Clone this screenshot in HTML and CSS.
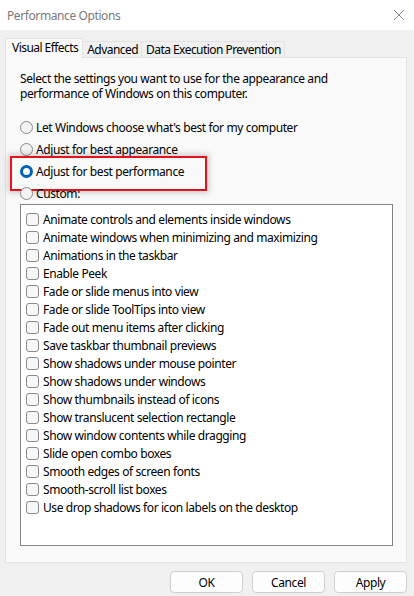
FILE: index.html
```html
<!DOCTYPE html>
<html>
<head>
<meta charset="utf-8">
<link rel="stylesheet" href="styles.css">
</head>
<body>
<div class="window">
  <div class="titlebar">
    <span class="title">Performance Options</span>
    <svg class="close" width="12" height="12" viewBox="0 0 12 12"><path d="M1 1 L11 11 M11 1 L1 11" stroke="#8a8a8a" stroke-width="1" fill="none"/></svg>
  </div>
  <div class="client">
    <div class="tabs">
      <div class="tab selected">Visual Effects</div>
      <div class="tab">Advanced</div>
      <div class="tab">Data Execution Prevention</div>
    </div>
    <div class="panel">
      <p class="intro">Select the settings you want to use for the appearance and performance of Windows on this computer.</p>
      <div class="radios">
        <div class="radio-row"><span class="radio"></span><span>Let Windows choose what's best for my computer</span></div>
        <div class="radio-row"><span class="radio"></span><span>Adjust for best appearance</span></div>
        <div class="radio-row highlight"><span class="radio checked"></span><span>Adjust for best performance</span><span class="redbox"></span></div>
        <div class="radio-row"><span class="radio"></span><span>Custom:</span></div>
      </div>
      <div class="listbox">
        <div class="item"><span class="check"></span><span>Animate controls and elements inside windows</span></div>
        <div class="item"><span class="check"></span><span>Animate windows when minimizing and maximizing</span></div>
        <div class="item"><span class="check"></span><span>Animations in the taskbar</span></div>
        <div class="item"><span class="check"></span><span>Enable Peek</span></div>
        <div class="item"><span class="check"></span><span>Fade or slide menus into view</span></div>
        <div class="item"><span class="check"></span><span>Fade or slide ToolTips into view</span></div>
        <div class="item"><span class="check"></span><span>Fade out menu items after clicking</span></div>
        <div class="item"><span class="check"></span><span>Save taskbar thumbnail previews</span></div>
        <div class="item"><span class="check"></span><span>Show shadows under mouse pointer</span></div>
        <div class="item"><span class="check"></span><span>Show shadows under windows</span></div>
        <div class="item"><span class="check"></span><span>Show thumbnails instead of icons</span></div>
        <div class="item"><span class="check"></span><span>Show translucent selection rectangle</span></div>
        <div class="item"><span class="check"></span><span>Show window contents while dragging</span></div>
        <div class="item"><span class="check"></span><span>Slide open combo boxes</span></div>
        <div class="item"><span class="check"></span><span>Smooth edges of screen fonts</span></div>
        <div class="item"><span class="check"></span><span>Smooth-scroll list boxes</span></div>
        <div class="item"><span class="check"></span><span>Use drop shadows for icon labels on the desktop</span></div>
      </div>
    </div>
    <div class="buttons">
      <button class="btn">OK</button>
      <button class="btn">Cancel</button>
      <button class="btn">Apply</button>
    </div>
  </div>
</div>
</body>
</html>
```
FILE: styles.css
```css
* { box-sizing: border-box; }
html, body { margin: 0; padding: 0; }
body {
  width: 414px;
  height: 596px;
  overflow: hidden;
  background: #f0f0f0;
  font-family: "Noto Sans", "Open Sans", sans-serif;
  font-size: 12px;
  letter-spacing: -0.4px;
  color: #000;
}
.window { width: 414px; height: 596px; }
.titlebar {
  height: 30px;
  background: #ffffff;
  display: flex;
  align-items: center;
  justify-content: space-between;
  padding: 0 9px 0 7px;
}
.title { color: #7a7a7a; font-size: 12px; }
.close { display: block; }
.client { padding: 8px 7px 0 5px; }
.tabs {
  display: flex;
  align-items: flex-end;
  height: 19px;
  position: relative;
  z-index: 2;
}
.tab {
  height: 16px;
  line-height: 15px;
  padding: 0 3px 0 4px;
  letter-spacing: -0.55px;
  border: 1px solid #e3e3e3;
  border-bottom: none;
  border-left: none;
  background: #f0f0f0;
  white-space: nowrap;
}
.tab.selected {
  height: 20px;
  line-height: 17px;
  border-left: 1px solid #e3e3e3;
  background: #f9f9f9;
  margin-bottom: -1px;
  padding: 0 4px 0 6px;
}
.panel {
  height: 506px;
  background: #f9f9f9;
  border: 1px solid #e3e3e3;
  padding: 13px 0 0 14px;
}
.intro {
  margin: 0;
  width: 345px;
  line-height: 15px;
}
.radios { margin-top: 15px; }
.radio-row {
  height: 22px;
  display: flex;
  align-items: center;
  gap: 3px;
  position: relative;
}
.radio {
  width: 13px;
  height: 13px;
  border-radius: 50%;
  border: 1px solid #8a8a8a;
  background: #f3f3f3;
  flex: none;
}
.radio.checked {
  border: 3.5px solid #005fb8;
  background: #ffffff;
}
.redbox {
  position: absolute;
  left: -10px;
  top: -4px;
  width: 197px;
  height: 35px;
  border: 2px solid #e8101a;
  box-shadow: 0 0 6px 2px rgba(0,0,0,0.18);
  pointer-events: none;
}
.listbox {
  width: 373px;
  height: 342px;
  background: #ffffff;
  border: 1px solid #828282;
  padding: 5px 0 0 5px;
}
.item {
  height: 18px;
  display: flex;
  align-items: center;
  gap: 4px;
}
.check {
  width: 13px;
  height: 13px;
  border: 1px solid #8a8a8a;
  border-radius: 3px;
  background: #f7f7f7;
  flex: none;
}
.buttons {
  display: flex;
  justify-content: flex-end;
  gap: 9px;
  margin-top: 8px;
}
.btn {
  width: 73px;
  height: 22px;
  border: 1px solid #d0d0d0;
  border-radius: 4px;
  background: #fdfdfd;
  font-family: "Noto Sans", "Open Sans", sans-serif;
  font-size: 12px;
  letter-spacing: -0.4px;
  color: #000;
  padding: 0;
}
```
